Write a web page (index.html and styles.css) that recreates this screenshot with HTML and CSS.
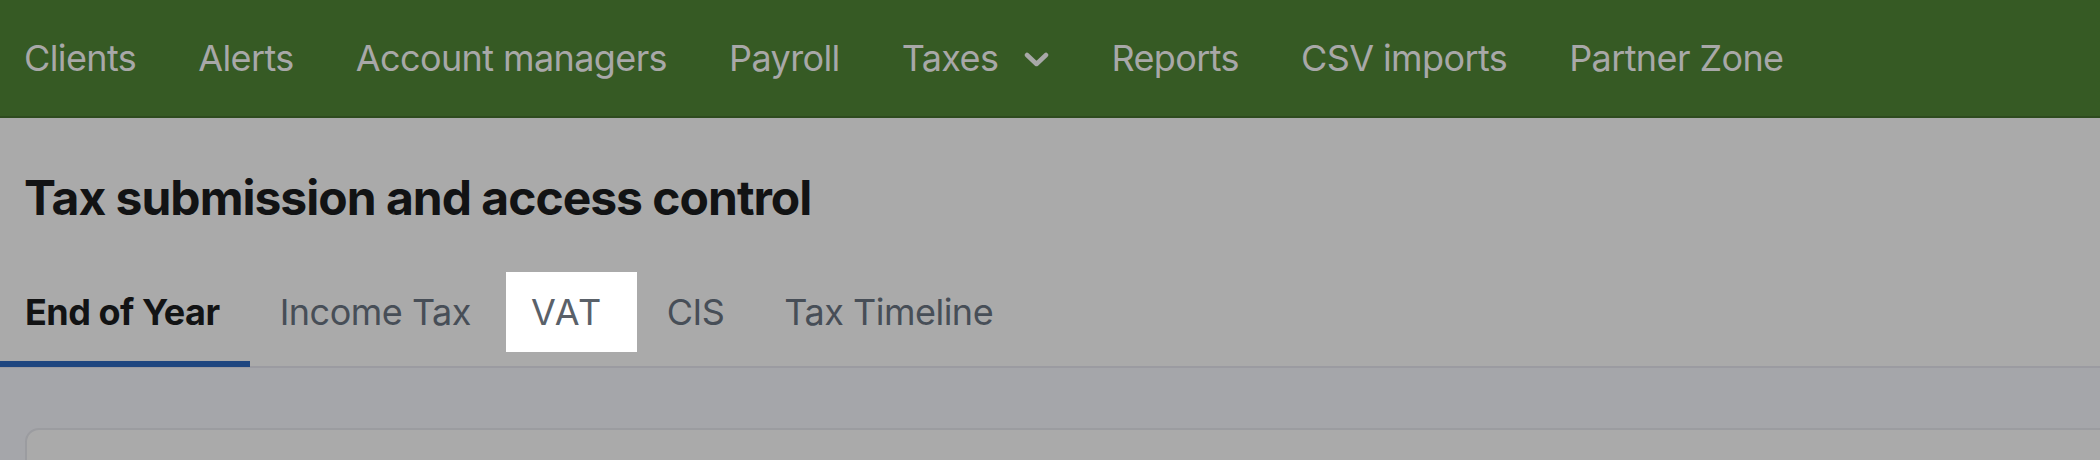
FILE: index.html
```html
<!DOCTYPE html>
<html lang="en">
<head>
<meta charset="utf-8">
<title>Tax submission and access control</title>
<link rel="stylesheet" href="styles.css">
</head>
<body>
<nav class="topnav">
  <a class="nav-item">Clients</a>
  <a class="nav-item">Alerts</a>
  <a class="nav-item">Account managers</a>
  <a class="nav-item">Payroll</a>
  <a class="nav-item nav-dropdown">Taxes
    <svg class="chevron" width="25" height="15" viewBox="0 0 25 15"><polyline points="3,3 12.5,12 22,3" fill="none" stroke="currentColor" stroke-width="4.5" stroke-linecap="round" stroke-linejoin="round"/></svg>
  </a>
  <a class="nav-item">Reports</a>
  <a class="nav-item">CSV imports</a>
  <a class="nav-item">Partner Zone</a>
</nav>
<header class="page-header">
  <h1 class="page-title">Tax submission and access control</h1>
</header>
<div class="tabs">
  <div class="tab tab-first tab-active"><span class="tab-label">End of Year</span></div>
  <div class="tab"><span class="tab-label">Income Tax</span></div>
  <div class="tab tab-highlight"><span class="tab-label">VAT</span></div>
  <div class="tab"><span class="tab-label">CIS</span></div>
  <div class="tab"><span class="tab-label">Tax Timeline</span></div>
</div>
<main class="content">
  <section class="card"></section>
</main>
</body>
</html>
```

FILE: styles.css
```css
html, body {
  margin: 0;
  padding: 0;
}
body {
  background: #aaaaaa;
  font-family: Inter, "Noto Sans", sans-serif;
  overflow: hidden;
  width: 2100px;
  height: 460px;
}
.topnav {
  height: 116px;
  border-bottom: 2px solid #2e4b1f;
  background: #365a24;
  display: flex;
  align-items: center;
  padding-left: 24px;
  gap: 62px;
}
.nav-item {
  color: #a8a8a8;
  font-size: 36px;
  font-weight: 400;
  letter-spacing: -0.6px;
  display: flex;
  align-items: center;
  white-space: nowrap;
}
.chevron {
  margin-left: 26px;
  margin-top: 2px;
}
.page-header {
  padding: 0 24px;
}
.page-title {
  margin: 50px 0 0 0;
  font-size: 48px;
  line-height: 60px;
  font-weight: 700;
  color: #121314;
  letter-spacing: -1px;
}
.tabs {
  margin-top: 44px;
  display: flex;
  border-bottom: 2px solid #9b9ba1;
}
.tab {
  display: flex;
  flex-direction: column;
  padding: 0 0 9px 0;
  border-bottom: 6px solid transparent;
  margin-bottom: -1px;
}
.tab-label {
  height: 80px;
  display: flex;
  align-items: center;
  padding: 0 30px;
  font-size: 36px;
  color: #474e57;
  letter-spacing: -0.5px;
  white-space: nowrap;
}
.tab-first .tab-label {
  padding-left: 25px;
}
.tab-active {
  border-bottom-color: #1f4680;
}
.tab-active .tab-label {
  color: #121314;
  font-weight: 700;
}
.tab-highlight {
  margin-left: 5px;
}
.tab-highlight .tab-label {
  background: #ffffff;
  color: #5a6169;
  letter-spacing: 1.5px;
  padding: 0 34px 0 25px;
}
.content {
  background: #a5a6aa;
  padding: 60px 0 0 25px;
  height: 100px;
}
.card {
  background: #aaaaaa;
  border: 2px solid #9b9ca0;
  border-radius: 14px;
  height: 200px;
  margin-right: -60px;
}
```
